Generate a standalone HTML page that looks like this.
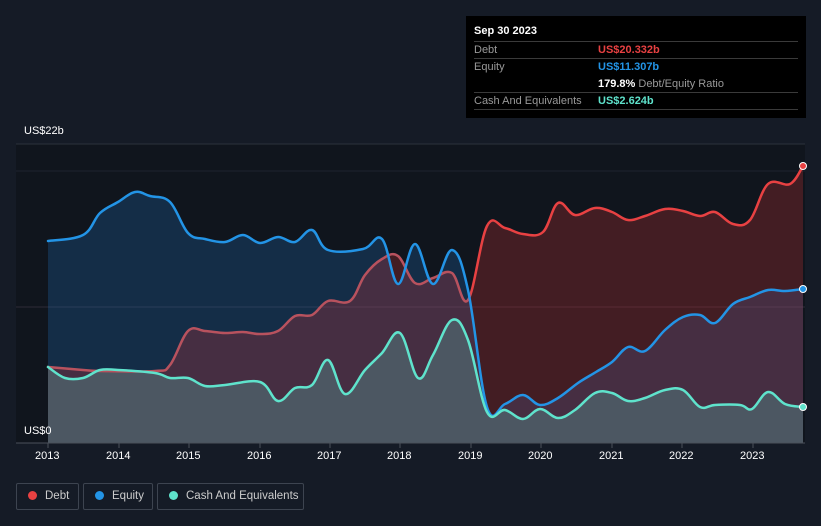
<!DOCTYPE html>
<html><head><meta charset="utf-8"><style>
html,body{margin:0;background:#151b26;width:821px;height:526px;overflow:hidden;font-family:"Liberation Sans",sans-serif;position:relative}
.tip{position:absolute;left:466px;top:16px;width:340px;height:102px;background:#000;color:#fff;font-size:11px}
.tip .r{position:absolute;left:8px;width:324px;border-top:1px solid #3a3a3a}
.tip span{position:absolute;white-space:nowrap}
.lab{color:#999;left:0}
.val{left:124px;font-weight:bold}
.leg{position:absolute;top:483px;height:27px;border:1px solid #3d4450;border-radius:2px;color:#ccc;font-size:11.5px;line-height:25px;box-sizing:border-box;white-space:nowrap}
.leg i{display:inline-block;width:9px;height:9px;border-radius:50%;margin:0 8px 0 11px;vertical-align:-1px}
.ax{position:absolute;color:#fff;font-size:11px;white-space:nowrap}
</style></head><body>
<svg width="821" height="526" style="position:absolute;left:0;top:0">
<defs>
<linearGradient id="dg" gradientUnits="userSpaceOnUse" x1="0" y1="0" x2="821" y2="0">
<stop offset="0.57" stop-color="#b8525e"/><stop offset="0.575" stop-color="#e84142"/></linearGradient>
</defs>
<rect x="16" y="144" width="789" height="299" fill="#10151d"/>
<line x1="16" y1="144" x2="805" y2="144" stroke="#2c323c"/>
<line x1="16" y1="171" x2="805" y2="171" stroke="#1e242e"/>
<line x1="16" y1="307" x2="805" y2="307" stroke="#2e2a36"/>
<path id="fe" fill="rgba(33,120,200,0.25)"/>
<path id="fd" fill="rgba(200,50,55,0.28)"/>
<path id="fc" fill="rgba(95,210,195,0.25)"/>
<g fill="none" stroke-width="2.5" stroke-linejoin="round" stroke-linecap="round">
<path id="ld" stroke="url(#dg)"/>
<path id="le" stroke="#2394e6"/>
<path id="lc" stroke="#5fe3cc"/>
</g>
<circle cx="803" cy="166" r="3.5" fill="#e84142" stroke="#fff"/>
<circle cx="803" cy="289" r="3.5" fill="#2394e6" stroke="#fff"/>
<circle cx="803" cy="407" r="3.5" fill="#5fe3cc" stroke="#fff"/>
<line x1="16" y1="443" x2="805" y2="443" stroke="#4a505a"/>
<g stroke="#4a505a"><line x1="48" y1="443" x2="48" y2="448"/><line x1="119" y1="443" x2="119" y2="448"/><line x1="189" y1="443" x2="189" y2="448"/><line x1="260" y1="443" x2="260" y2="448"/><line x1="330" y1="443" x2="330" y2="448"/><line x1="400" y1="443" x2="400" y2="448"/><line x1="471" y1="443" x2="471" y2="448"/><line x1="541" y1="443" x2="541" y2="448"/><line x1="612" y1="443" x2="612" y2="448"/><line x1="682" y1="443" x2="682" y2="448"/><line x1="753" y1="443" x2="753" y2="448"/></g>
</svg>
<script>
function sm(s){var p=s.split(' ').map(function(t){return t.split(',').map(Number)});var d='M'+p[0][0]+','+p[0][1];
for(var i=0;i<p.length-1;i++){var a=p[i-1]||p[i],b=p[i],c=p[i+1],e=p[i+2]||c;var k=0.18;
d+=' C'+(b[0]+(c[0]-a[0])*k).toFixed(1)+','+(b[1]+(c[1]-a[1])*k).toFixed(1)+' '+(c[0]-(e[0]-b[0])*k).toFixed(1)+','+(c[1]-(e[1]-b[1])*k).toFixed(1)+' '+c[0]+','+c[1];}return d;}
var E="48,241 83,235 100,213 118,202 135,192 150,196 170,202 188,233 205,239 225,242 243,235 260,243 278,237 295,242 312,230 328,250 363,249 382,239 398,284 415,244 433,284 452,250 468,290 487,407 505,404 523,395 540,405 558,398 578,383 596,372 612,362 628,347 645,351 665,330 683,317 700,315 715,323 733,304 750,297 768,290 785,291 803,289";
var D="48,367 83,370 100,371 155,371 170,365 188,331 205,331 225,333 243,332 260,334 278,331 295,316 312,315 328,301 350,301 365,275 382,259 398,256 415,283 433,278 452,273 468,300 487,226 505,228 523,234 543,232 558,203 575,215 595,208 612,212 628,220 645,216 665,209 683,211 700,216 715,212 733,224 750,220 768,184 790,184 803,166";
var C="48,367 65,378 83,378 100,370 118,370 155,373 170,378 188,378 205,386 225,385 260,382 278,401 295,388 312,385 328,360 345,394 365,370 382,353 400,333 418,378 433,355 452,320 468,340 487,412 505,410 523,419 540,409 558,418 575,410 595,393 612,393 628,401 645,398 665,390 683,390 700,407 715,405 740,405 752,409 768,392 785,404 803,407";
[[E,'le','fe'],[D,'ld','fd'],[C,'lc','fc']].forEach(function(q){var d=sm(q[0]);document.getElementById(q[1]).setAttribute('d',d);document.getElementById(q[2]).setAttribute('d',d+' L803,443 L48,443 Z');});
</script>
<div class="ax" style="left:24px;top:125px">US$22b</div>
<div class="ax" style="left:24px;top:425px">US$0</div>
<div class="ax" style="left:0;top:450px;width:821px;height:14px">
<span style="position:absolute;left:35px">2013</span><span style="position:absolute;left:106px">2014</span><span style="position:absolute;left:176px">2015</span><span style="position:absolute;left:247px">2016</span><span style="position:absolute;left:317px">2017</span><span style="position:absolute;left:387px">2018</span><span style="position:absolute;left:458px">2019</span><span style="position:absolute;left:528px">2020</span><span style="position:absolute;left:599px">2021</span><span style="position:absolute;left:669px">2022</span><span style="position:absolute;left:740px">2023</span></div>
<div class="tip">
<span style="left:8px;top:9px;font-weight:bold">Sep 30 2023</span>
<div class="r" style="top:25px;height:16px"><span class="lab" style="top:2px">Debt</span><span class="val" style="top:2px;color:#e84142">US$20.332b</span></div>
<div class="r" style="top:42px;height:16px"><span class="lab" style="top:2px">Equity</span><span class="val" style="top:2px;color:#2394e6">US$11.307b</span><span class="val" style="top:19px">179.8% <b style="color:#999;font-weight:normal">Debt/Equity Ratio</b></span></div>
<div class="r" style="top:76px;height:17px"><span class="lab" style="top:2px">Cash And Equivalents</span><span class="val" style="top:2px;color:#5fe3cc">US$2.624b</span></div>
<div class="r" style="top:93px;height:0"></div>
</div>
<div class="leg" style="left:16px;width:63px"><i style="background:#e84142"></i>Debt</div>
<div class="leg" style="left:83px;width:70px"><i style="background:#2394e6"></i>Equity</div>
<div class="leg" style="left:157px;width:147px"><i style="background:#5fe3cc"></i>Cash And Equivalents</div>
</body></html>
